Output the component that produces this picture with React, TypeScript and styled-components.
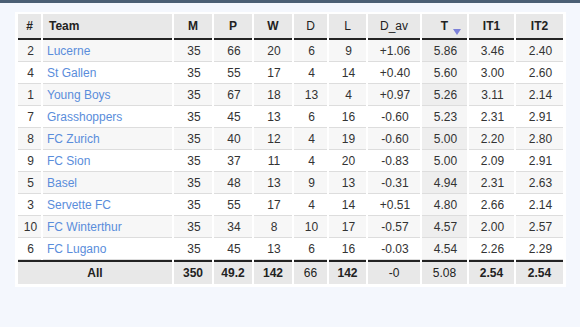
import React from 'react';
import styled, { createGlobalStyle } from 'styled-components';

const GlobalStyle = createGlobalStyle`
  html, body {
    margin: 0;
    padding: 0;
    background: #f4f7fd;
    font-family: 'Liberation Sans', Arial, sans-serif;
  }
`;

const TopBar = styled.div`
  height: 3px;
  background: #4b5f74;
`;

const Page = styled.div`
  width: 580px;
  height: 324px;
  padding: 9px 0 0 15px;
  box-sizing: border-box;
`;

const Panel = styled.div`
  width: 551px;
  padding: 2px 1px 3px 1px;
  box-sizing: border-box;
  background: #ffffff;
`;

const Table = styled.table`
  width: 547px;
  table-layout: fixed;
  border-collapse: separate;
  border-spacing: 2px 0;
  font-size: 12px;
  color: #333333;
`;

const HeadCell = styled.th<{ $left?: boolean; $light?: boolean; $sorted?: boolean }>`
  position: relative;
  height: 24px;
  padding: 0 ${(p) => (p.$left ? '6px' : '2px')};
  background: #e8e8e8;
  border-bottom: 2px solid #222222;
  color: #222222;
  font-weight: ${(p) => (p.$light ? 'normal' : 'bold')};
  text-align: ${(p) => (p.$left ? 'left' : 'center')};
  vertical-align: middle;

  ${(p) =>
    p.$sorted &&
    `
    &::after {
      content: '';
      position: absolute;
      left: 31px;
      top: 15px;
      width: 0;
      height: 0;
      border-left: 4px solid transparent;
      border-right: 4px solid transparent;
      border-top: 6px solid #7b80d8;
    }
  `}
`;

const Row = styled.tr<{ $odd: boolean }>`
  background: ${(p) => (p.$odd ? '#f7f7f7' : '#ffffff')};
`;

const Cell = styled.td<{ $left?: boolean; $sorted?: boolean; $odd?: boolean }>`
  height: 21px;
  padding: 0 0 0 ${(p) => (p.$left ? '4px' : '2px')};
  border-bottom: 1px solid #dddddd;
  text-align: ${(p) => (p.$left ? 'left' : 'center')};
  white-space: nowrap;
  overflow: hidden;
  background: ${(p) => (p.$sorted ? (p.$odd ? '#eeeeee' : '#f6f6f6') : 'inherit')};
`;

const TeamLink = styled.a`
  color: #5a8ddb;
  text-decoration: none;
`;

const FootCell = styled.td<{ $light?: boolean }>`
  height: 22px;
  padding: 0 2px;
  background: #e8e8e8;
  border-top: 2px solid #222222;
  color: #222222;
  text-align: center;
  font-weight: ${(p) => (p.$light ? 'normal' : 'bold')};
`;

const widths = [23, 129, 38, 38, 38, 33, 37, 52, 45, 45, 47];

const headers = [
  { label: '#' },
  { label: 'Team', left: true },
  { label: 'M' },
  { label: 'P' },
  { label: 'W' },
  { label: 'D', light: true },
  { label: 'L', light: true },
  { label: 'D_av', light: true },
  { label: 'T', sorted: true },
  { label: 'IT1' },
  { label: 'IT2' },
];

type TeamRow = [string, string, number, number, number, number, number, string, string, string, string];

const rows: TeamRow[] = [
  ['2', 'Lucerne', 35, 66, 20, 6, 9, '+1.06', '5.86', '3.46', '2.40'],
  ['4', 'St Gallen', 35, 55, 17, 4, 14, '+0.40', '5.60', '3.00', '2.60'],
  ['1', 'Young Boys', 35, 67, 18, 13, 4, '+0.97', '5.26', '3.11', '2.14'],
  ['7', 'Grasshoppers', 35, 45, 13, 6, 16, '-0.60', '5.23', '2.31', '2.91'],
  ['8', 'FC Zurich', 35, 40, 12, 4, 19, '-0.60', '5.00', '2.20', '2.80'],
  ['9', 'FC Sion', 35, 37, 11, 4, 20, '-0.83', '5.00', '2.09', '2.91'],
  ['5', 'Basel', 35, 48, 13, 9, 13, '-0.31', '4.94', '2.31', '2.63'],
  ['3', 'Servette FC', 35, 55, 17, 4, 14, '+0.51', '4.80', '2.66', '2.14'],
  ['10', 'FC Winterthur', 35, 34, 8, 10, 17, '-0.57', '4.57', '2.00', '2.57'],
  ['6', 'FC Lugano', 35, 45, 13, 6, 16, '-0.03', '4.54', '2.26', '2.29'],
];

const totals = [
  { value: '350' },
  { value: '49.2' },
  { value: '142' },
  { value: '66', light: true },
  { value: '142' },
  { value: '-0', light: true },
  { value: '5.08', light: true },
  { value: '2.54' },
  { value: '2.54' },
];

export default function App() {
  return (
    <>
      <GlobalStyle />
      <TopBar />
      <Page>
        <Panel>
          <Table>
            <colgroup>
              {widths.map((w, i) => (
                <col key={i} style={{ width: w }} />
              ))}
            </colgroup>
            <thead>
              <tr>
                {headers.map((h) => (
                  <HeadCell key={h.label} $left={h.left} $light={h.light} $sorted={h.sorted}>
                    {h.label}
                  </HeadCell>
                ))}
              </tr>
            </thead>
            <tbody>
              {rows.map((r, i) => {
                const odd = i % 2 === 0;
                return (
                  <Row key={r[1]} $odd={odd}>
                    <Cell>{r[0]}</Cell>
                    <Cell $left>
                      <TeamLink href="#">{r[1]}</TeamLink>
                    </Cell>
                    {r.slice(2).map((v, j) => (
                      <Cell key={j} $sorted={j === 6} $odd={odd}>
                        {v}
                      </Cell>
                    ))}
                  </Row>
                );
              })}
            </tbody>
            <tfoot>
              <tr>
                <FootCell colSpan={2}>All</FootCell>
                {totals.map((t, i) => (
                  <FootCell key={i} $light={t.light}>
                    {t.value}
                  </FootCell>
                ))}
              </tr>
            </tfoot>
          </Table>
        </Panel>
      </Page>
    </>
  );
}
